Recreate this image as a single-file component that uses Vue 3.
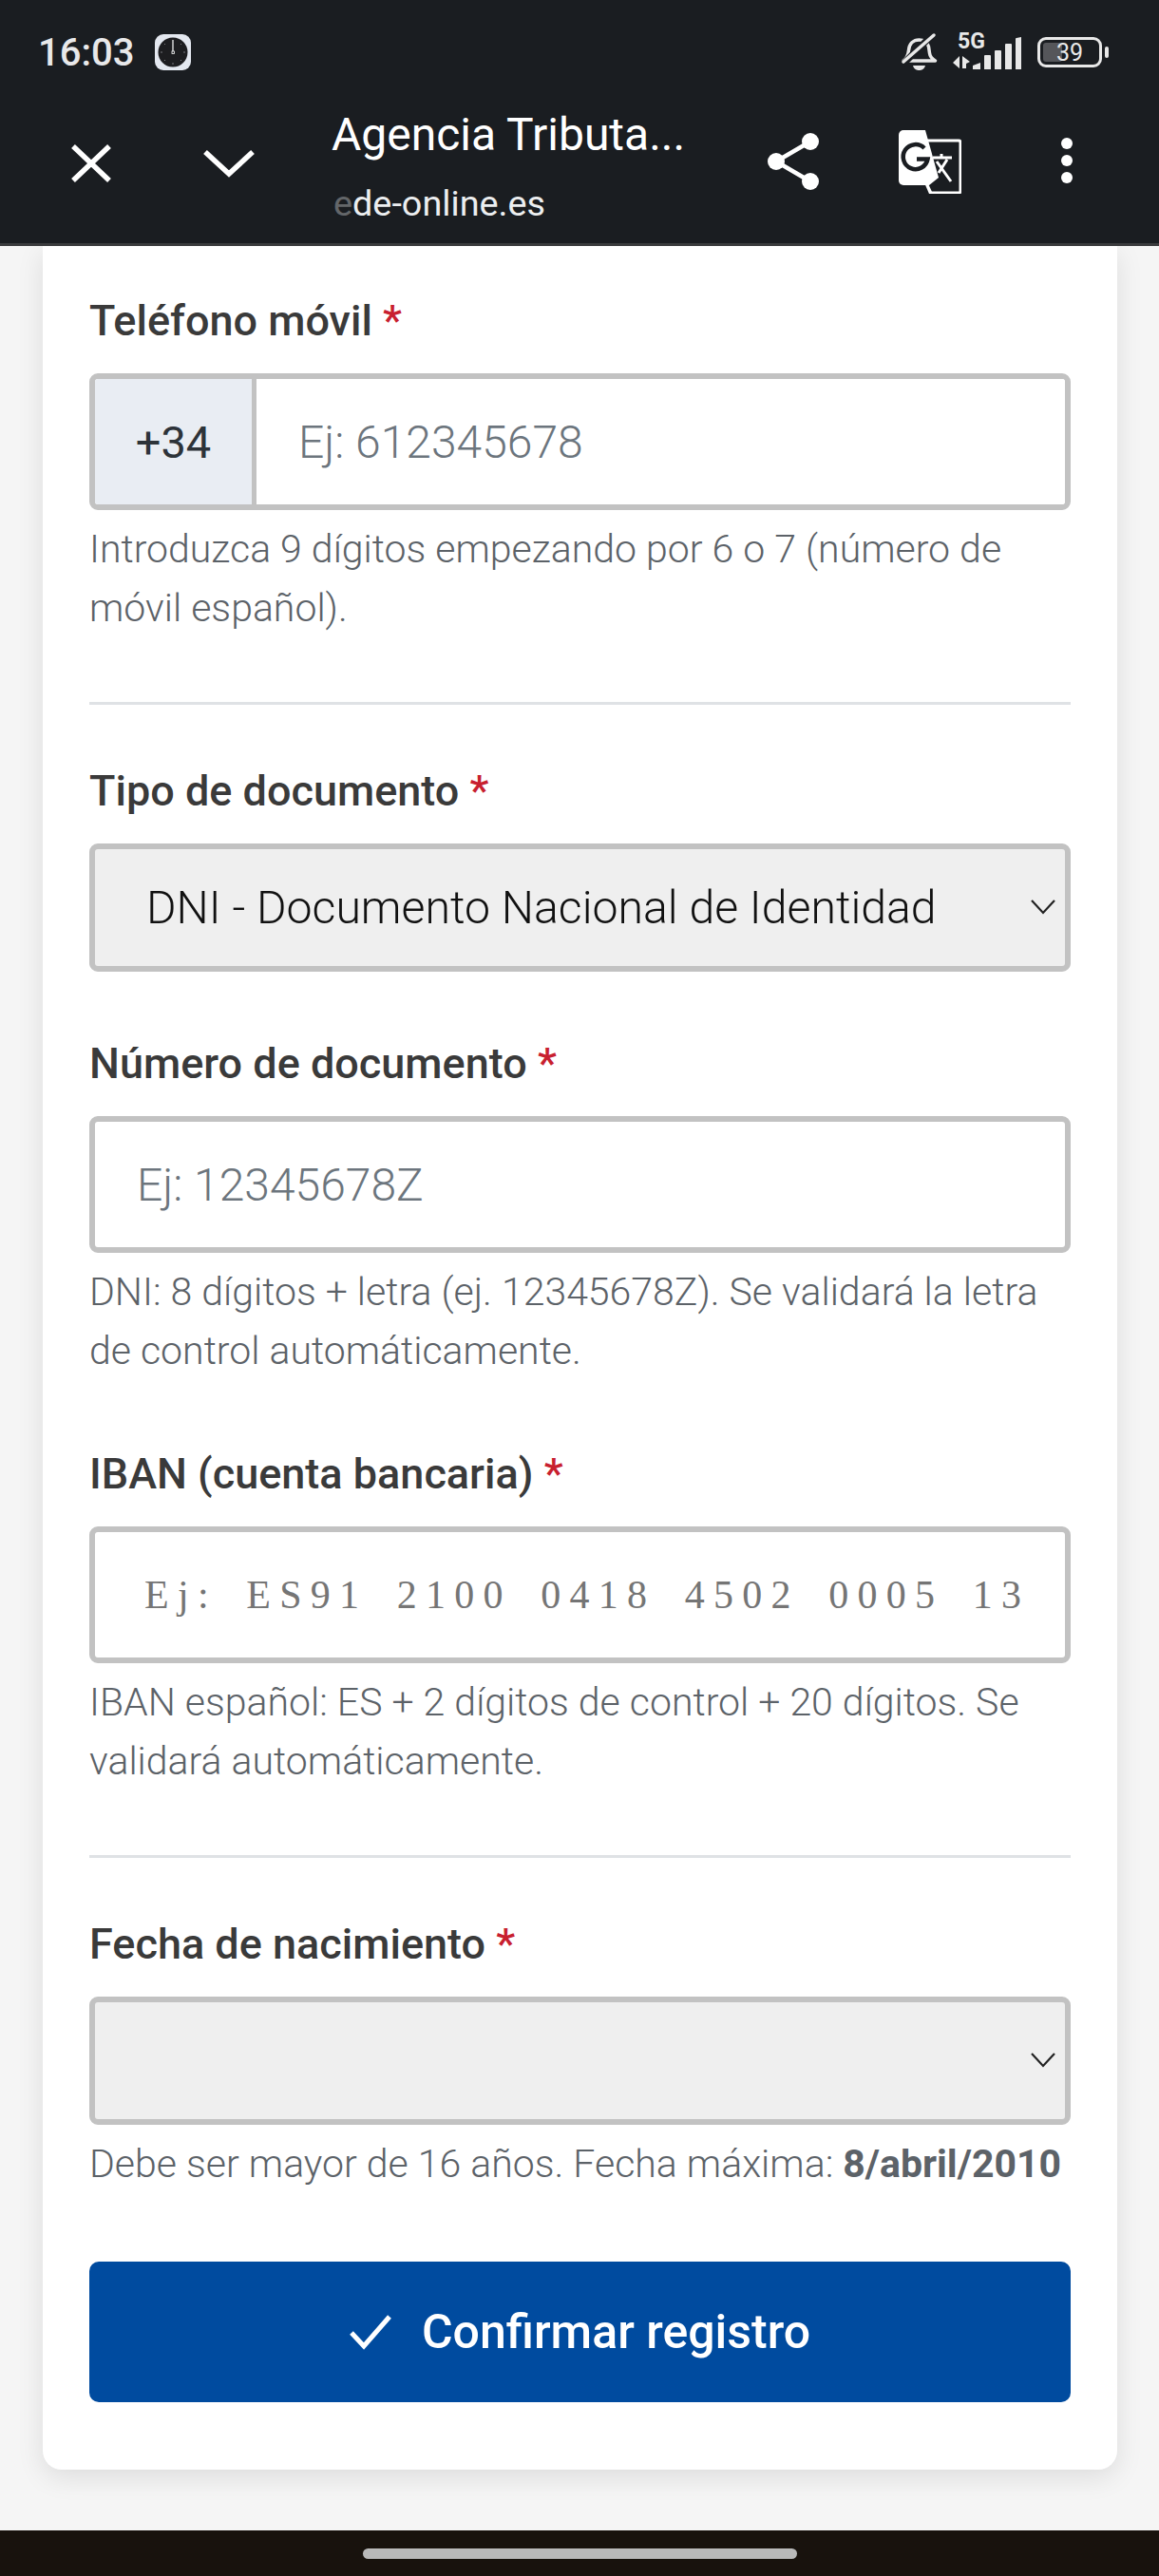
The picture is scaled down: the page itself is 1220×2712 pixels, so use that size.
<script setup>
const fechaMax = '8/abril/2010'
</script>

<template>
  <div class="screen">
    <header class="top">
      <div class="status">
        <div class="status-left">
          <span class="time">16:03</span>
          <svg class="clock" viewBox="0 0 40 40" aria-hidden="true">
            <rect x="1" y="1" width="38" height="38" rx="9" fill="#e4e8f0" />
            <circle cx="20" cy="20" r="15.500" fill="#1d1d20" />
            <path d="M20 7v12" stroke="#fff" stroke-width="1.200" />
            <path d="M20 33v-2M7 20h2M33 20h-2M11 11l1 1M29 11l-1 1M11 29l1-1M29 29l-1-1" stroke="#77787c" stroke-width="1" />
            <rect x="19" y="19" width="2.400" height="2.400" fill="none" stroke="#fff" stroke-width=".8" />
          </svg>
        </div>
        <div class="status-right">
          <svg class="bell" viewBox="0 0 40 42" aria-hidden="true">
            <path d="M3 30c4-3 5-6 5.500-11 .6-7 5-11 11-11 5 0 8.500 2.500 10 7l1 7c.5 3.500 2.500 6 6 8z" fill="none" stroke="#e8e8e8" stroke-width="3.500" stroke-linejoin="round" />
            <path d="M2 34 34 2" stroke="#1a1d21" stroke-width="7" />
            <path d="M3 31 35 3" stroke="#e8e8e8" stroke-width="3.500" stroke-linecap="round" />
            <path d="M13 35h13c-1 4-4 5-6.500 5S14 39 13 35z" fill="#e8e8e8" />
          </svg>
          <div class="net">
            <span class="net-label">5G</span>
            <svg class="bars" viewBox="0 0 72 36" aria-hidden="true">
              <path d="M7 22v13L0 29zM10 22v13h4v-5l4-2-8-6z" fill="#e8e8e8" />
              <path d="M21 36v-4l8-3v7zM33 36V22q0-1 1-1h5q1 0 1 1v14zM44 36V17q0-1 1-1h5q1 0 1 1v19zM55 36V10q0-1 1-1h5q1 0 1 1v26zM66 36V4q0-1 1-1l5-1v34z" fill="#e8e8e8" />
            </svg>
          </div>
          <div class="battery">
            <span class="battery-fill"></span>
            <span class="battery-text">39</span>
          </div>
          <span class="battery-nub"></span>
        </div>
      </div>
      <div class="bar">
        <svg class="close" viewBox="0 0 44 40" aria-hidden="true">
          <path d="M3 2l38 36M41 2 3 38" stroke="#fff" stroke-width="5.500" fill="none" />
        </svg>
        <svg class="down" viewBox="0 0 54 30" aria-hidden="true">
          <path d="M2 3l25 23L52 3" stroke="#fff" stroke-width="5.500" fill="none" />
        </svg>
        <div class="title-box">
          <div class="title">Agencia Tributa...</div>
          <div class="url"><span class="fade">e</span>de-online.es</div>
        </div>
        <svg class="share" viewBox="0 0 54 60" aria-hidden="true">
          <path d="M45 9 9 30l36 21" stroke="#fff" stroke-width="4.500" fill="none" />
          <circle cx="45" cy="9" r="9" fill="#fff" />
          <circle cx="9" cy="30" r="9" fill="#fff" />
          <circle cx="45" cy="51" r="9" fill="#fff" />
        </svg>
        <svg class="translate" viewBox="0 0 66 67" aria-hidden="true">
          <path d="M30 11h33a2 2 0 0 1 2 2v51a2 2 0 0 1-2 2H34" stroke="#fff" stroke-width="3" fill="none" />
          <path d="M5 0h23l14 50-10 8H5a5 5 0 0 1-5-5V5a5 5 0 0 1 5-5z" fill="#fff" />
          <path d="M27 19a13 13 0 1 0 3.500 11.500H19" stroke="#1a1d21" stroke-width="4.500" fill="none" />
          <path d="M36 29h20M45 25v4M40 33l15 21M51 31 42 45" stroke="#fff" stroke-width="3" fill="none" />
          <path d="M28 50l8 17h-4l-6-14z" fill="#fff" />
        </svg>
        <svg class="more" viewBox="0 0 12 48" aria-hidden="true">
          <circle cx="6" cy="6" r="6" fill="#fff" />
          <circle cx="6" cy="24" r="6" fill="#fff" />
          <circle cx="6" cy="42" r="6" fill="#fff" />
        </svg>
      </div>
    </header>

    <main class="page">
      <form class="card" @submit.prevent>
        <div class="field">
          <label class="label" for="tel">Teléfono móvil <span class="req">*</span></label>
          <div class="group">
            <span class="prefix">+34</span>
            <input id="tel" class="control joined" type="tel" placeholder="Ej: 612345678" />
          </div>
          <p class="help">Introduzca 9 dígitos empezando por 6 o 7 (número de móvil español).</p>
        </div>

        <hr class="rule" />

        <div class="field compact">
          <label class="label" for="tipo">Tipo de documento <span class="req">*</span></label>
          <div class="select-wrap">
            <select id="tipo" class="select">
              <option>DNI - Documento Nacional de Identidad</option>
            </select>
            <svg class="caret" viewBox="0 0 26 16" aria-hidden="true">
              <path d="M1 1l12 13L25 1" stroke="#222" stroke-width="2.200" fill="none" />
            </svg>
          </div>
        </div>

        <div class="field">
          <label class="label" for="num">Número de documento <span class="req">*</span></label>
          <input id="num" class="control" type="text" placeholder="Ej: 12345678Z" />
          <p class="help">DNI: 8 dígitos + letra (ej. 12345678Z). Se validará la letra de control automáticamente.</p>
        </div>

        <div class="field">
          <label class="label" for="iban">IBAN (cuenta bancaria) <span class="req">*</span></label>
          <input id="iban" class="control mono" type="text" placeholder="Ej: ES91 2100 0418 4502 0005 13" />
          <p class="help">IBAN español: ES + 2 dígitos de control + 20 dígitos. Se validará automáticamente.</p>
        </div>

        <hr class="rule" />

        <div class="field last">
          <label class="label" for="fecha">Fecha de nacimiento <span class="req">*</span></label>
          <div class="select-wrap">
            <select id="fecha" class="select">
              <option></option>
            </select>
            <svg class="caret" viewBox="0 0 26 16" aria-hidden="true">
              <path d="M1 1l12 13L25 1" stroke="#222" stroke-width="2.200" fill="none" />
            </svg>
          </div>
          <p class="help">Debe ser mayor de 16 años. Fecha máxima: <strong>{{ fechaMax }}</strong></p>
        </div>

        <button class="submit" type="submit">
          <svg class="check" viewBox="0 0 44 38" aria-hidden="true">
            <path d="M2 20l13 14L42 3" stroke="#fff" stroke-width="5" fill="none" />
          </svg>
          <span>Confirmar registro</span>
        </button>
      </form>
    </main>

    <footer class="nav">
      <span class="pill"></span>
    </footer>
  </div>
</template>

<style scoped>
.screen {
  width: 1220px;
  height: 2712px;
  display: flex;
  flex-direction: column;
  overflow: hidden;
  background: #f5f5f5;
  font-family: Roboto, "Liberation Sans", sans-serif;
}

.top {
  position: relative;
  z-index: 1;
  height: 259px;
  box-sizing: border-box;
  flex: none;
  background: #1a1d21;
  border-bottom: 3px solid #3a3b3d;
}
.status {
  height: 110px;
  padding: 0 53px 0 40px;
  display: flex;
  align-items: center;
  justify-content: space-between;
}
.status-left,
.status-right {
  display: flex;
  align-items: center;
}
.time {
  font-size: 40px;
  font-weight: 500;
  color: #e8e8ea;
}
.clock {
  width: 40px;
  height: 40px;
  margin-left: 21px;
}
.bell {
  width: 40px;
  height: 42px;
}
.net {
  position: relative;
  width: 72px;
  height: 36px;
  margin-left: 15px;
}
.net-label {
  position: absolute;
  left: 5px;
  top: -5px;
  font-size: 23px;
  line-height: 24px;
  font-weight: 700;
  color: #e8e8e8;
}
.bars {
  position: absolute;
  left: 0;
  top: 0;
  width: 72px;
  height: 36px;
}
.battery {
  position: relative;
  width: 68px;
  height: 32px;
  box-sizing: border-box;
  margin-left: 17px;
  border: 3px solid #e8e8e8;
  border-radius: 9px;
  display: flex;
  align-items: center;
  justify-content: center;
}
.battery-fill {
  position: absolute;
  left: 3px;
  top: 3px;
  bottom: 3px;
  width: 20px;
  border-radius: 3px;
  background: #55565a;
}
.battery-text {
  position: relative;
  font-size: 25px;
  color: #e8e8e8;
}
.battery-nub {
  width: 4px;
  height: 12px;
  margin-left: 3px;
  border-radius: 2px;
  background: #e8e8e8;
}

.bar {
  height: 146px;
  display: flex;
  align-items: center;
  padding-left: 74px;
}
.close {
  width: 44px;
  height: 40px;
  flex: none;
  margin-top: -22px;
}
.down {
  width: 54px;
  height: 30px;
  flex: none;
  margin: -22px 0 0 96px;
}
.title-box {
  width: 400px;
  flex: none;
  margin-left: 81px;
  margin-top: -18px;
  color: #fff;
}
.title {
  font-size: 48px;
  line-height: 60px;
  white-space: nowrap;
}
.url {
  margin-top: 20px;
  padding-left: 2px;
  font-size: 37.800px;
  line-height: 44px;
  color: #eceef0;
}
.fade {
  opacity: 0.35;
}
.share {
  width: 54px;
  height: 60px;
  flex: none;
  margin: -26px 0 0 59px;
}
.translate {
  width: 66px;
  height: 67px;
  flex: none;
  margin: -26px 0 0 84px;
}
.more {
  width: 12px;
  height: 48px;
  flex: none;
  margin: -28px 0 0 105px;
}

.page {
  flex: 1;
  min-height: 0;
  padding: 0 44px 0 45px;
}
.card {
  box-sizing: border-box;
  height: 2341px;
  padding: 48px 49px 72px;
  background: #fff;
  border-radius: 0 0 20px 20px;
  box-shadow: 0 8px 28px rgba(0, 0, 0, 0.1);
}

.field {
  margin-bottom: 68px;
}
.field.compact {
  margin-bottom: 66px;
}
.field.last {
  margin-bottom: 72px;
}
.label {
  display: block;
  margin-bottom: 24px;
  font-size: 45px;
  line-height: 62px;
  font-weight: 500;
  color: #3a3a3a;
}
.req {
  color: #c8202f;
}
.group {
  display: flex;
  height: 144px;
  box-sizing: border-box;
  border: 6px solid #c2c2c2;
  border-radius: 9px;
  overflow: hidden;
}
.prefix {
  width: 170px;
  box-sizing: border-box;
  flex: none;
  display: flex;
  align-items: center;
  justify-content: center;
  background: #e9edf3;
  border-right: 5px solid #c2c2c2;
  font-size: 47px;
  color: #2d3339;
}
.control {
  display: block;
  width: 100%;
  height: 144px;
  box-sizing: border-box;
  padding: 0 44px;
  border: 6px solid #c2c2c2;
  border-radius: 9px;
  outline: none;
  background: #fff;
  font-family: inherit;
  font-size: 48px;
  font-weight: 300;
  color: #333;
}
.control.joined {
  flex: 1;
  min-width: 0;
  height: 100%;
  border: 0;
  border-radius: 0;
}
.control::placeholder {
  color: #6c757d;
  opacity: 1;
}
.mono {
  padding: 0 20px 0 52px;
  font-family: "Liberation Serif", serif;
  font-size: 42px;
  font-weight: 400;
  letter-spacing: 9.300px;
  word-spacing: 10.500px;
}
.mono::placeholder {
  color: #757575;
}
.help {
  margin: 10px 0 0;
  font-size: 41px;
  line-height: 62px;
  font-weight: 300;
  color: #5c6268;
}
.help strong {
  font-weight: 700;
}
.rule {
  height: 3px;
  margin: 0 0 60px;
  border: 0;
  background: #dfe2e5;
}
.select-wrap {
  position: relative;
}
.select {
  display: block;
  width: 100%;
  height: 135px;
  box-sizing: border-box;
  padding: 0 70px 0 54px;
  border: 6px solid #c2c2c2;
  border-radius: 9px;
  outline: none;
  appearance: none;
  background: #efefef;
  font-family: inherit;
  font-size: 48.200px;
  font-weight: 300;
  color: #111;
}
.caret {
  position: absolute;
  right: 16px;
  top: 59px;
  width: 26px;
  height: 16px;
  pointer-events: none;
}
.submit {
  width: 100%;
  height: 148px;
  display: flex;
  align-items: center;
  justify-content: center;
  gap: 32px;
  padding-left: 6px;
  border: 0;
  border-radius: 10px;
  background: #004b9f;
  color: #fff;
  font-family: inherit;
  font-size: 50px;
  font-weight: 500;
}
.check {
  width: 44px;
  height: 38px;
  flex: none;
}

.nav {
  height: 48px;
  flex: none;
  display: flex;
  align-items: flex-start;
  justify-content: center;
  background: #18120d;
}
.pill {
  width: 457px;
  height: 11px;
  margin-top: 19px;
  border-radius: 6px;
  background: #b9b9b9;
}
</style>
